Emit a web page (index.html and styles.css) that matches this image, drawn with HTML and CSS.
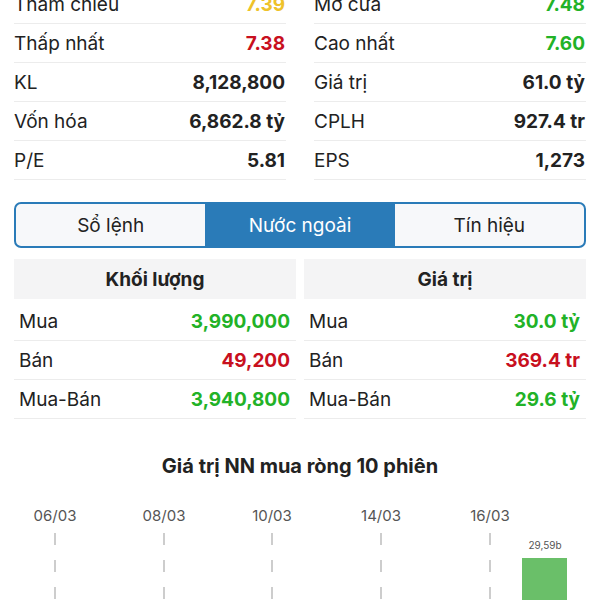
FILE: index.html
```html
<!DOCTYPE html>
<html lang="vi">
<head>
    <meta charset="UTF-8">
    <meta name="viewport" content="width=device-width, initial-scale=1.0">
    <title>Chi tiết cổ phiếu</title>
    <link rel="stylesheet" href="styles.css">
</head>
<body>
    <div class="page">
        <div class="stats">
            <div class="stat-row"><span>Tham chiếu</span><span class="val ref">7.39</span></div>
            <div class="stat-row"><span>Mở cửa</span><span class="val up">7.48</span></div>
            <div class="stat-row"><span>Thấp nhất</span><span class="val down">7.38</span></div>
            <div class="stat-row"><span>Cao nhất</span><span class="val up">7.60</span></div>
            <div class="stat-row"><span>KL</span><span class="val">8,128,800</span></div>
            <div class="stat-row"><span>Giá trị</span><span class="val">61.0 tỷ</span></div>
            <div class="stat-row"><span>Vốn hóa</span><span class="val">6,862.8 tỷ</span></div>
            <div class="stat-row"><span>CPLH</span><span class="val">927.4 tr</span></div>
            <div class="stat-row"><span>P/E</span><span class="val">5.81</span></div>
            <div class="stat-row"><span>EPS</span><span class="val">1,273</span></div>
        </div>

        <div class="tabs">
            <div class="tab">Sổ lệnh</div>
            <div class="tab active">Nước ngoài</div>
            <div class="tab">Tín hiệu</div>
        </div>

        <div class="foreign">
            <div class="table">
                <div class="table-head">Khối lượng</div>
                <div class="table-row"><span>Mua</span><span class="val up">3,990,000</span></div>
                <div class="table-row"><span>Bán</span><span class="val down">49,200</span></div>
                <div class="table-row"><span>Mua-Bán</span><span class="val up">3,940,800</span></div>
            </div>
            <div class="table">
                <div class="table-head">Giá trị</div>
                <div class="table-row"><span>Mua</span><span class="val up">30.0 tỷ</span></div>
                <div class="table-row"><span>Bán</span><span class="val down">369.4 tr</span></div>
                <div class="table-row"><span>Mua-Bán</span><span class="val up">29.6 tỷ</span></div>
            </div>
        </div>

        <div class="chart-title">Giá trị NN mua ròng 10 phiên</div>

        <svg class="chart" width="600" height="110" viewBox="0 0 600 110">
            <g class="chart-dates">
                <text x="55" y="19">06/03</text>
                <text x="164" y="19">08/03</text>
                <text x="272" y="19">10/03</text>
                <text x="381" y="19">14/03</text>
                <text x="490" y="19">16/03</text>
            </g>
            <g class="chart-grid">
                <line x1="55" y1="31" x2="55" y2="110"/>
                <line x1="164" y1="31" x2="164" y2="110"/>
                <line x1="272" y1="31" x2="272" y2="110"/>
                <line x1="381" y1="31" x2="381" y2="110"/>
                <line x1="490" y1="31" x2="490" y2="110"/>
            </g>
            <text class="bar-label" x="545" y="47">29,59b</text>
            <rect class="bar" x="522" y="56" width="45" height="54"/>
        </svg>
    </div>
</body>
</html>
```

FILE: styles.css
```css
* {
    box-sizing: border-box;
    margin: 0;
    padding: 0;
}

body {
    font-family: Inter, "Noto Sans", sans-serif;
    background: white;
    color: #222;
    overflow: hidden;
}

.page {
    width: 600px;
    height: 600px;
    overflow: hidden;
}

.stats {
    display: grid;
    grid-template-columns: 1fr 1fr;
    column-gap: 28px;
    padding: 0 14px;
    margin-top: -15px;
}

.stat-row {
    display: flex;
    justify-content: space-between;
    align-items: center;
    height: 39px;
    font-size: 19px;
    border-bottom: 1px solid #ececec;
    padding-right: 1px;
}

.val {
    font-weight: 700;
}

.ref {
    color: #eec22a;
}

.up {
    color: #22b227;
}

.down {
    color: #c8101e;
}

.tabs {
    display: flex;
    margin: 22px 14px 0;
    height: 46px;
    border: 2px solid #2a7bb8;
    border-radius: 7px;
    overflow: hidden;
    background: #f7f8fa;
}

.tab {
    flex: 1;
    display: flex;
    align-items: center;
    justify-content: center;
    font-size: 19px;
    color: #222;
}

.tab.active {
    background: #2a7bb8;
    color: white;
}

.foreign {
    display: flex;
    gap: 8px;
    margin: 11px 14px 0;
}

.table {
    flex: 1;
}

.table-head {
    height: 40px;
    background: #f4f4f5;
    display: flex;
    align-items: center;
    justify-content: center;
    font-size: 19px;
    font-weight: 700;
    margin-bottom: 3px;
}

.table-row {
    display: flex;
    justify-content: space-between;
    align-items: center;
    height: 39px;
    padding: 0 6px 0 5px;
    font-size: 19px;
    border-bottom: 1px solid #ececec;
}

.chart-title {
    text-align: center;
    font-size: 20px;
    line-height: 24px;
    font-weight: 700;
    margin-top: 35px;
}

.chart {
    display: block;
    margin-top: 24px;
}

.chart-dates text {
    font-family: Inter, sans-serif;
    font-size: 15px;
    fill: #555;
    text-anchor: middle;
}

.chart-grid line {
    stroke: #bdbdbd;
    stroke-width: 1.5;
    stroke-dasharray: 12 15;
}

.bar-label {
    font-family: Inter, sans-serif;
    font-size: 10px;
    fill: #555;
    text-anchor: middle;
}

.bar {
    fill: #6abf69;
}
```
